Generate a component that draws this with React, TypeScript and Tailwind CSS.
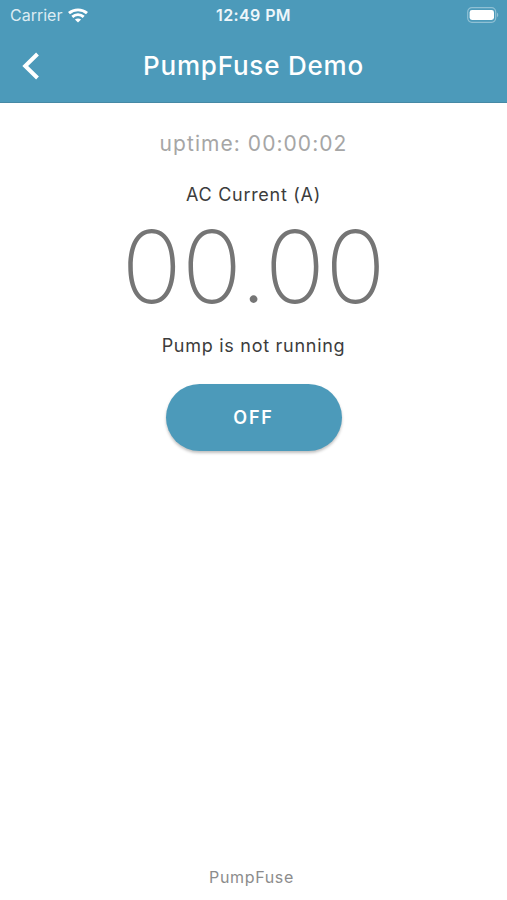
function WifiIcon() {
  return (
    <svg viewBox="0 0 20 15" className="h-[15px] w-5" fill="none" stroke="white" strokeWidth="2.9" aria-hidden="true">
      <path d="M1 5.2C6 0.7 14 0.7 19 5.2" />
      <path d="M4.3 8.8C7.6 5.9 12.4 5.9 15.7 8.8" />
      <path d="M10 14.6L6.9 11.5C8.7 10 11.3 10 13.1 11.5Z" fill="white" stroke="none" />
    </svg>
  );
}

function BatteryIcon() {
  return (
    <svg viewBox="0 0 33 16" className="h-4 w-[33px]" fill="none" aria-hidden="true">
      <rect x="1.7" y="0.7" width="28" height="14.6" rx="4.2" stroke="#8fc0d4" strokeWidth="1.2" />
      <rect x="3.6" y="3" width="24.4" height="10" rx="2.4" fill="white" />
      <path d="M31 5.8C32.6 6.4 32.6 9.6 31 10.2Z" fill="#8fc0d4" />
    </svg>
  );
}

function StatusBar() {
  return (
    <div className="grid h-[30px] grid-cols-3 items-center px-2 text-base">
      <div className="flex items-center gap-1.5 pl-0.5">
        <span className="text-[#dcecf3]">Carrier</span>
        <WifiIcon />
      </div>
      <span className="text-center font-semibold tracking-wide text-[#eef6fa]">12:49 PM</span>
      <div className="flex justify-end">
        <BatteryIcon />
      </div>
    </div>
  );
}

export default function App() {
  return (
    <div className="flex min-h-screen flex-col bg-white font-['Inter','Liberation_Sans',sans-serif]">
      <header className="border-b border-[#4689a5] bg-[#4c9aba] text-white">
        <StatusBar />
        <div className="grid h-[72px] grid-cols-[64px_1fr_64px] items-center">
          <button type="button" aria-label="Back" className="flex h-full items-center pl-[22px]">
            <svg viewBox="0 0 18 28" className="h-7 w-[18px]" fill="none" stroke="white" strokeWidth="4" aria-hidden="true">
              <path d="M15.5 2L3.2 14L15.5 26" />
            </svg>
          </button>
          <h1 className="text-center text-[26px] leading-[34px] font-medium tracking-[0.03em]">PumpFuse Demo</h1>
        </div>
      </header>

      <main className="flex flex-1 flex-col items-center pt-6 text-[#3c3c3c]">
        <p className="text-[21px] leading-[34px] tracking-wider text-[#a6a6a6]">uptime: 00:00:02</p>
        <p className="mt-5 text-lg leading-7 tracking-[0.04em]">AC Current (A)</p>
        <p className="text-[100px] font-extralight leading-[115px] text-[#757575]">00.00</p>
        <p className="mt-2 text-lg leading-7 tracking-[0.04em]">Pump is not running</p>
        <button
          type="button"
          className="mt-6 h-[67px] w-44 rounded-full bg-[#4c9aba] text-lg font-semibold tracking-widest text-white shadow-[0_2px_3px_rgba(0,0,0,0.25)]"
        >
          OFF
        </button>
      </main>

      <footer className="pr-1 pb-3 text-center text-base leading-[22px] tracking-[0.04em] text-[#8c8c8c]">PumpFuse</footer>
    </div>
  );
}
